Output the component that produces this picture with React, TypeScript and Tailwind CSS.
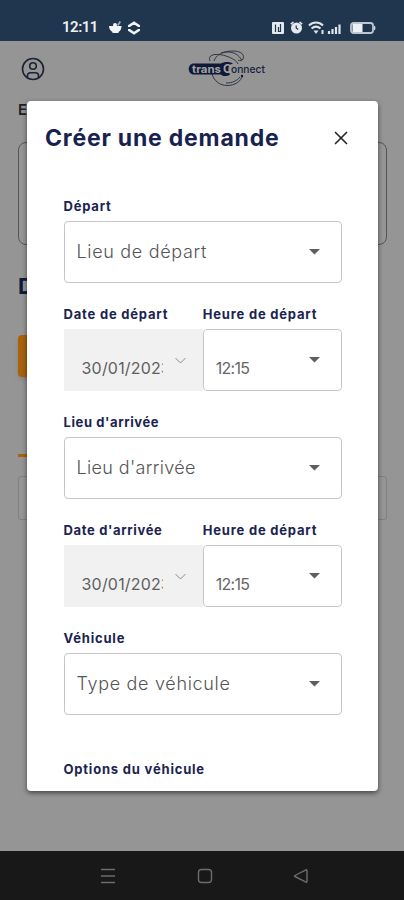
import React from 'react';
import { X } from 'lucide-react';

type FieldProps = {
  value: string;
  className?: string;
};

const Label = ({ children, className = 'tracking-[0.8px]' }: { children: React.ReactNode; className?: string }) => (
  <label className={`block h-[18px] mb-1.5 text-[13px] leading-[18px] font-bold text-[#1b2450] whitespace-nowrap ${className}`}>
    {children}
  </label>
);

const Select = ({ value, className = 'text-[18px] tracking-[0.68px] font-light text-[#555]' }: FieldProps) => (
  <div className="flex items-center justify-between h-[62px] pl-3 pr-[21px] rounded-[4px] border border-[#c6c6c6] bg-white">
    <span className={`pb-0.5 ${className}`}>{value}</span>
    <svg width="11" height="6" viewBox="0 0 11 6">
      <path d="M0 0h11L5.5 5.5z" fill="#5f5f5f" />
    </svg>
  </div>
);

const TimeSelect = ({ value }: FieldProps) => (
  <Select value={value} className="pt-[17px] text-[16px] tracking-[-0.7px] text-[#666]" />
);

const DateField = ({ value }: FieldProps) => (
  <div className="flex items-center h-[62px] pl-[18px] bg-[#f1f1f1]">
    <span className="w-[81px] pt-[15px] overflow-hidden whitespace-nowrap text-[16px] tracking-[0.2px] text-[#606060]">{value}</span>
    <svg className="ml-[12px]" width="11" height="7" viewBox="0 0 11 7" fill="none">
      <path d="M0.5 1l5 5 5-5" stroke="#8a8a8a" strokeWidth="1" />
    </svg>
  </div>
);

const Logo = () => (
  <svg width="80" height="40" viewBox="0 0 80 40" fill="none">
    <path d="M24 25c2 7 8 11.500 15 11.500 8 0 14-4 15.500-10M26 12C28 6 34 3 40 3c6 0 11 3 13.500 8" stroke="#303641" strokeWidth="1" />
    <path d="M22 12c-3-7 7-8 16-5 6 2 11 5 12 8M33 4c12-4 25-2 22 6-1 2-3 2-5 1M38 34c6 0 11-2 14-6" stroke="#303641" strokeWidth="1" />
    <path d="M6 14.500h27c3-2 9-2 12 0-5 1-6 6-3 11-3 2-7 2-9 0H6c-7 0-7-11 0-11z" fill="#101a38" />
    <circle cx="54" cy="27" r="1.200" fill="#101a38" />
    <text x="4" y="23.500" fontSize="11" fontWeight="700" textLength="29" lengthAdjust="spacingAndGlyphs" fill="#a2a2a2" fontFamily="Inter, sans-serif">trans</text>
    <text x="35" y="23.500" fontSize="12" fontWeight="700" fill="#a2a2a2" fontFamily="Inter, sans-serif">C</text>
    <text x="43" y="23.500" fontSize="11" fontWeight="500" textLength="34" lengthAdjust="spacingAndGlyphs" fill="#161f38" fontFamily="Inter, sans-serif">onnect</text>
  </svg>
);

const StatusBar = () => (
  <div className="flex items-center justify-between h-[41px] pt-[14px] pl-[62px] pr-[28px] bg-[#20364e]">
    <div className="flex items-center">
      <span className="w-[47px] text-[15px] tracking-[-0.5px] font-semibold text-[#eef1f4] font-['Roboto',sans-serif]">12:11</span>
      <svg width="13" height="13" viewBox="0 0 13 13" fill="#f2f5f7">
        <path d="M0 5h12.500c0 3-1 5-3 6v1h-6v-1C1.500 10 0 8 0 5z" />
        <circle cx="6" cy="4" r="2" />
        <path d="M8 4l2.500-4L12 1 9.500 5z" opacity=".6" />
      </svg>
      <svg className="ml-[6px]" width="12" height="14" viewBox="0 0 12 14" fill="none" stroke="#f2f5f7" strokeWidth="2.500">
        <path d="M1.200 6V5L6 1.800 10.800 5v1M1.200 8v1L6 12.200 10.800 9V8" />
      </svg>
    </div>
    <div className="flex items-center">
      <svg width="12" height="12" viewBox="0 0 12 12">
        <rect width="12" height="12" rx="1" fill="#e4e9ed" />
        <path d="M3.500 10V2.500M8.500 2v7.500H6.500V5" fill="none" stroke="#20364e" strokeWidth="1.200" />
      </svg>
      <svg className="ml-[6px]" width="13" height="13" viewBox="0 0 13 13">
        <circle cx="6.500" cy="7" r="5.500" fill="#e4e9ed" />
        <path d="M.8 3.200L3.500 1M12.200 3.200L9.500 1" stroke="#e4e9ed" strokeWidth="1.600" />
        <path d="M6.200 4.500V7l2 1.500" fill="none" stroke="#20364e" strokeWidth="1.200" />
      </svg>
      <svg className="ml-[5px]" width="34" height="14" viewBox="0 0 34 14" fill="none" stroke="#dfe5ea">
        <path d="M1 4.500c4-4 10-4 14 0M3.500 7.500c3-2.500 6-2.500 9 0" strokeWidth="2" />
        <path d="M5.500 9.500h5L8 13z" fill="#dfe5ea" stroke="none" />
        <path d="M14.500 9v4" strokeWidth="2" />
        <path d="M21 10v3M24.500 8v5M28 6v7M31.500 3.500v9.500" strokeWidth="2.200" />
      </svg>
      <svg className="ml-[8px]" width="26" height="12" viewBox="0 0 26 12">
        <rect x="1" y="1" width="22" height="10" rx="2.500" fill="none" stroke="#bcc6cf" strokeWidth="1.800" />
        <rect x="2.500" y="2" width="10" height="8" fill="#eef1f4" />
        <path d="M24 3.500c2 1 2 4 0 5z" fill="#cfd7de" />
      </svg>
    </div>
  </div>
);

const NavigationBar = () => (
  <div className="flex justify-between h-[49px] pt-[17px] pl-[100px] pr-[95px] bg-[#181818]">
    <svg width="16" height="16" viewBox="0 0 16 16" stroke="#6c6c6c" strokeWidth="1.300">
      <path d="M1 1.500h14M1 8h14M1 14.500h14" />
    </svg>
    <svg width="16" height="16" viewBox="0 0 16 16" fill="none" stroke="#6c6c6c" strokeWidth="1.400">
      <rect x="1.500" y="1.500" width="13" height="13" rx="3" />
    </svg>
    <svg width="16" height="16" viewBox="0 0 16 16" fill="none" stroke="#6c6c6c" strokeWidth="1.400">
      <path d="M13 1.800L2 7.500c-.6.300-.6.700 0 1l11 5.700c.6.300 1 0 1-.6V2.400c0-.6-.4-.9-1-.6z" />
    </svg>
  </div>
);

// Dimmed page behind the dialog
const Background = () => (
  <main className="h-[810px] pl-[18px] pr-[17px] pt-[9px] bg-[#959595]">
    <header className="flex items-center h-[38px] pl-[3px]">
      <svg width="24" height="24" viewBox="0 0 24 24" fill="none" stroke="#1b2235" strokeWidth="1.600">
        <circle cx="12" cy="12" r="10.500" />
        <circle cx="12" cy="9" r="3.300" />
        <path d="M6.500 20v-1.500c0-2 1.500-2.800 3-2.800h5c1.500 0 3 .8 3 2.800V20" />
      </svg>
      <div className="ml-[143px]">
        <Logo />
      </div>
    </header>
    <p className="mt-3 h-[20px] text-[15px] leading-[20px] font-semibold text-[#202020]">Entreprise</p>
    <div className="mt-[22px] h-[103px] rounded-[8px] border border-[#555]" />
    <h1 className="mt-[28px] h-[26px] text-[22px] leading-[26px] font-bold text-[#0e1a3c]">Demandes</h1>
    <div className="mt-[36px] h-[42px] w-[160px] rounded-[4px] bg-[#a7620c] shadow-md" />
    <div className="mt-[77px] h-[3px] w-[120px] bg-[#a7620c]" />
    <div className="mt-[19px] h-[44px] rounded-[3px] border border-[#808080]" />
  </main>
);

const RequestDialog = () => (
  <div
    role="dialog"
    className="absolute left-[27px] top-[101px] w-[351px] h-[690px] overflow-hidden rounded-[4px] bg-white shadow-[0_2px_5px_rgba(0,0,0,0.55)]"
  >
    <div className="flex items-center justify-between h-[74px] pl-[18px] pr-[26px]">
      <h2 className="text-[23px] font-bold tracking-[0.8px] text-[#172250] whitespace-nowrap">Créer une demande</h2>
      <X size={22} strokeWidth={1.8} className="text-[#262626]" />
    </div>
    <form className="flex flex-col gap-[22px] pt-[22px] pl-[36.5px] pr-[36px]">
      <div>
        <Label>Départ</Label>
        <Select value="Lieu de départ" />
      </div>
      <div className="grid grid-cols-2">
        <div>
          <Label>Date de départ</Label>
          <DateField value="30/01/2023" />
        </div>
        <div>
          <Label>Heure de départ</Label>
          <TimeSelect value="12:15" />
        </div>
      </div>
      <div>
        <Label className="tracking-[0.6px]">Lieu d'arrivée</Label>
        <Select value="Lieu d'arrivée" className="text-[18px] tracking-[0.35px] font-light text-[#555]" />
      </div>
      <div className="grid grid-cols-2">
        <div>
          <Label className="tracking-[0.65px]">Date d'arrivée</Label>
          <DateField value="30/01/2023" />
        </div>
        <div>
          <Label>Heure de départ</Label>
          <TimeSelect value="12:15" />
        </div>
      </div>
      <div>
        <Label>Véhicule</Label>
        <Select value="Type de véhicule" />
      </div>
      <div className="pt-[23px]">
        <Label>Options du véhicule</Label>
      </div>
    </form>
  </div>
);

const App = () => (
  <div className="relative w-[404px] h-[900px] overflow-hidden font-['Inter',sans-serif]">
    <StatusBar />
    <Background />
    <NavigationBar />
    <RequestDialog />
  </div>
);

export default App;
